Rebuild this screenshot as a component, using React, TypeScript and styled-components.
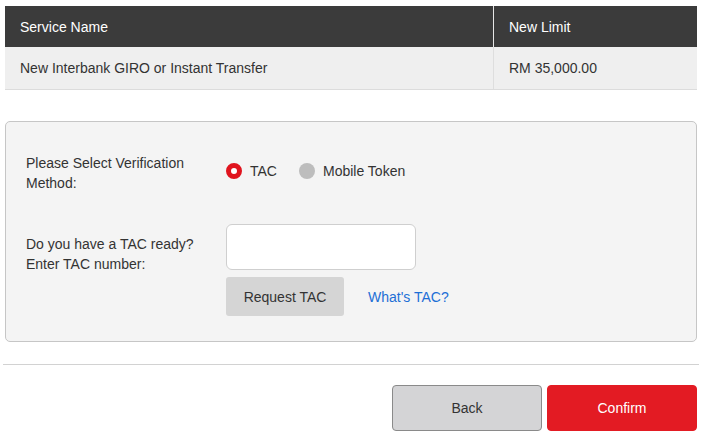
import React, { useState } from "react";
import styled, { createGlobalStyle } from "styled-components";

const GlobalStyle = createGlobalStyle`
  body {
    margin: 0;
    background: #fff;
    font-family: "Liberation Sans", Arial, sans-serif;
    font-size: 14px;
    color: #333;
  }
`;

const Page = styled.div`
  width: 692px;
  padding: 6px 5px 0;
`;

const Table = styled.table`
  width: 100%;
  border-collapse: collapse;
`;

const HeadCell = styled.th<{ $w?: string }>`
  background: #3b3b3b;
  color: #fff;
  font-weight: normal;
  text-align: left;
  height: 41px;
  padding: 0 15px;
  width: ${(p) => p.$w || "auto"};
  border-left: ${(p) => (p.$w ? "1px solid #e6e6e6" : "none")};
`;

const Cell = styled.td<{ $divider?: boolean }>`
  background: #efefef;
  height: 42px;
  padding: 0 15px;
  border-bottom: 1px solid #dcdcdc;
  border-left: ${(p) => (p.$divider ? "1px solid #dedede" : "none")};
`;

const Panel = styled.div`
  margin-top: 31px;
  background: #f4f4f4;
  border: 1px solid #c6c6c6;
  border-radius: 5px;
  padding: 31px 20px 25px;
`;

const FormRow = styled.div<{ $top?: number }>`
  display: flex;
  margin-top: ${(p) => p.$top || 0}px;
`;

const Label = styled.div<{ $offset?: number }>`
  width: 200px;
  line-height: 20px;
  padding-top: ${(p) => p.$offset || 0}px;
`;

const RadioGroup = styled.div`
  display: flex;
  align-items: center;
  gap: 22px;
  height: 36px;
`;

const RadioOption = styled.label`
  display: flex;
  align-items: center;
  gap: 8px;
  cursor: pointer;
`;

const RadioDot = styled.span<{ $on: boolean }>`
  width: 16px;
  height: 16px;
  border-radius: 50%;
  box-sizing: border-box;
  background: ${(p) => (p.$on ? "#fff" : "#bdbdbd")};
  border: ${(p) => (p.$on ? "5px solid #e0141e" : "none")};
`;

const InputCol = styled.div`
  display: flex;
  flex-direction: column;
  gap: 7px;
`;

const TacInput = styled.input`
  width: 190px;
  height: 46px;
  box-sizing: border-box;
  border: 1px solid #cfcfcf;
  border-radius: 6px;
  background: #fff;
  outline: none;
  font: inherit;
  padding: 0 10px;
`;

const ActionRow = styled.div`
  display: flex;
  align-items: center;
  gap: 24px;
`;

const GrayButton = styled.button`
  width: 118px;
  height: 39px;
  border: none;
  border-radius: 3px;
  background: #d5d5d5;
  color: #333;
  font: inherit;
  cursor: pointer;
`;

const Link = styled.a`
  color: #1d6fd6;
  text-decoration: none;
`;

const Divider = styled.hr`
  margin: 22px -2px 0;
  border: none;
  border-top: 1px solid #d2d2d2;
`;

const Footer = styled.div`
  display: flex;
  justify-content: flex-end;
  gap: 5px;
  margin-top: 20px;
`;

const FooterButton = styled.button<{ $primary?: boolean }>`
  width: 150px;
  height: 46px;
  border-radius: 4px;
  font: inherit;
  cursor: pointer;
  background: ${(p) => (p.$primary ? "#e31b23" : "#d4d4d6")};
  color: ${(p) => (p.$primary ? "#fff" : "#333")};
  border: 1px solid ${(p) => (p.$primary ? "#e31b23" : "#8a8a8a")};
`;

export default function App() {
  const [method, setMethod] = useState<"tac" | "token">("tac");

  return (
    <>
      <GlobalStyle />
      <Page>
        <Table>
          <thead>
            <tr>
              <HeadCell>Service Name</HeadCell>
              <HeadCell $w="173px">New Limit</HeadCell>
            </tr>
          </thead>
          <tbody>
            <tr>
              <Cell>New Interbank GIRO or Instant Transfer</Cell>
              <Cell $divider>RM 35,000.00</Cell>
            </tr>
          </tbody>
        </Table>

        <Panel>
          <FormRow>
            <Label>
              Please Select Verification
              <br />
              Method:
            </Label>
            <RadioGroup>
              <RadioOption onClick={() => setMethod("tac")}>
                <RadioDot $on={method === "tac"} />
                TAC
              </RadioOption>
              <RadioOption onClick={() => setMethod("token")}>
                <RadioDot $on={method === "token"} />
                Mobile Token
              </RadioOption>
            </RadioGroup>
          </FormRow>

          <FormRow $top={31}>
            <Label $offset={10}>
              Do you have a TAC ready?
              <br />
              Enter TAC number:
            </Label>
            <InputCol>
              <TacInput />
              <ActionRow>
                <GrayButton>Request TAC</GrayButton>
                <Link href="#">What's TAC?</Link>
              </ActionRow>
            </InputCol>
          </FormRow>
        </Panel>

        <Divider />

        <Footer>
          <FooterButton>Back</FooterButton>
          <FooterButton $primary>Confirm</FooterButton>
        </Footer>
      </Page>
    </>
  );
}
